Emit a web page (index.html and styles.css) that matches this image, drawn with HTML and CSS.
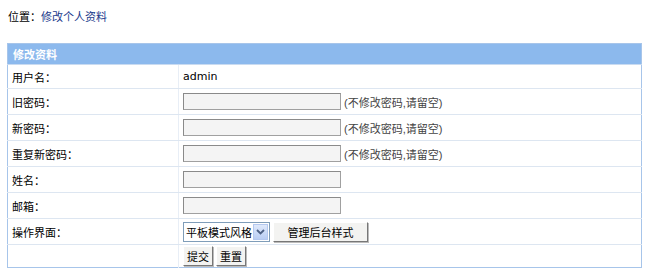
FILE: index.html
```html
<!DOCTYPE html>
<html lang="zh-CN">
<head>
    <meta charset="UTF-8">
    <title>修改个人资料</title>
    <link rel="stylesheet" href="styles.css">
</head>
<body>
    <div class="position">位置：<a href="#">修改个人资料</a></div>

    <table class="form-table">
        <tr>
            <th colspan="2">修改资料</th>
        </tr>
        <tr class="first">
            <td class="label">用户名：</td>
            <td class="value"><span class="name">admin</span></td>
        </tr>
        <tr>
            <td class="label">旧密码：</td>
            <td class="value"><input type="password" class="txt"> <span class="tip">(不修改密码,请留空)</span></td>
        </tr>
        <tr>
            <td class="label">新密码：</td>
            <td class="value"><input type="password" class="txt"> <span class="tip">(不修改密码,请留空)</span></td>
        </tr>
        <tr>
            <td class="label">重复新密码：</td>
            <td class="value"><input type="password" class="txt"> <span class="tip">(不修改密码,请留空)</span></td>
        </tr>
        <tr>
            <td class="label">姓名：</td>
            <td class="value"><input type="text" class="txt"></td>
        </tr>
        <tr>
            <td class="label">邮箱：</td>
            <td class="value"><input type="text" class="txt"></td>
        </tr>
        <tr>
            <td class="label">操作界面：</td>
            <td class="value">
                <div class="ui-row">
                    <div class="select">
                        <span class="select-text">平板模式风格</span>
                        <span class="select-arrow">
                            <svg width="9" height="6" viewBox="0 0 9 6"><path d="M1 1 L4.5 4.5 L8 1" fill="none" stroke="#4d6185" stroke-width="1.8"/></svg>
                        </span>
                    </div>
                    <button class="btn btn-wide">管理后台样式</button>
                </div>
            </td>
        </tr>
        <tr>
            <td class="label"></td>
            <td class="value">
                <div class="ui-row">
                    <button class="btn">提交</button>
                    <button class="btn">重置</button>
                </div>
            </td>
        </tr>
    </table>
</body>
</html>
```

FILE: styles.css
```css
body {
    margin: 0;
    padding: 0;
    font-family: "Liberation Sans", "Noto Sans CJK SC", sans-serif;
    font-size: 11px;
    color: #000;
    background: #fff;
}
.position {
    padding: 10px 0 0 8px;
    height: 22px;
    line-height: 14px;
}
.position a {
    color: #1a3a8c;
    text-decoration: none;
}
.form-table {
    margin: 11px 0 0 7px;
    width: 635px;
    border-collapse: collapse;
    border: 1px solid #a7c5ea;
}
.form-table th {
    height: 20px;
    padding: 0 0 0 5px;
    background: #8cb9ed;
    color: #fff;
    font-weight: bold;
    text-align: left;
    border-bottom: 1px solid #c9dbf1;
}
.form-table td {
    height: 25px;
    padding: 0;
    border-bottom: 1px solid #dde6f1;
}
.form-table tr.first td {
    height: 23px;
}
.form-table tr:last-child td {
    border-bottom: none;
    height: 22px;
}
.label {
    width: 166px;
    padding-left: 4px !important;
    border-right: 1px solid #e8eef6;
}
.value {
    padding-left: 4px !important;
}
.name {
    font-family: "DejaVu Sans", sans-serif;
    font-size: 11px;
}
.txt {
    width: 152px;
    height: 13px;
    margin: 0;
    padding: 1px 2px;
    border: 1px solid #a0a0a0;
    border-top-color: #8a8a8a;
    border-left-color: #8a8a8a;
    background: #f4f4f4;
    vertical-align: middle;
}
.tip {
    color: #444;
    vertical-align: middle;
}
.ui-row {
    display: flex;
    align-items: center;
    gap: 3px;
}
.select {
    display: flex;
    align-items: center;
    height: 18px;
    border: 1px solid #7f9db9;
    background: #fff;
}
.select-text {
    padding: 0 1px 0 2px;
}
.select-arrow {
    width: 15px;
    height: 16px;
    margin-right: 1px;
    display: flex;
    align-items: center;
    justify-content: center;
    background: linear-gradient(#dfe9fb, #b9cdf3);
    border: 1px solid #b4c8ef;
    box-sizing: border-box;
}
.btn {
    height: 20px;
    padding: 0 3px;
    font-family: "Noto Sans CJK SC", sans-serif;
    font-size: 11px;
    background: #f3f3f1;
    border: 1px solid #fff;
    border-right-color: #777;
    border-bottom-color: #777;
    box-shadow: 1px 1px 0 #bbb;
    cursor: pointer;
}
.btn-wide {
    width: 95px;
}
```
